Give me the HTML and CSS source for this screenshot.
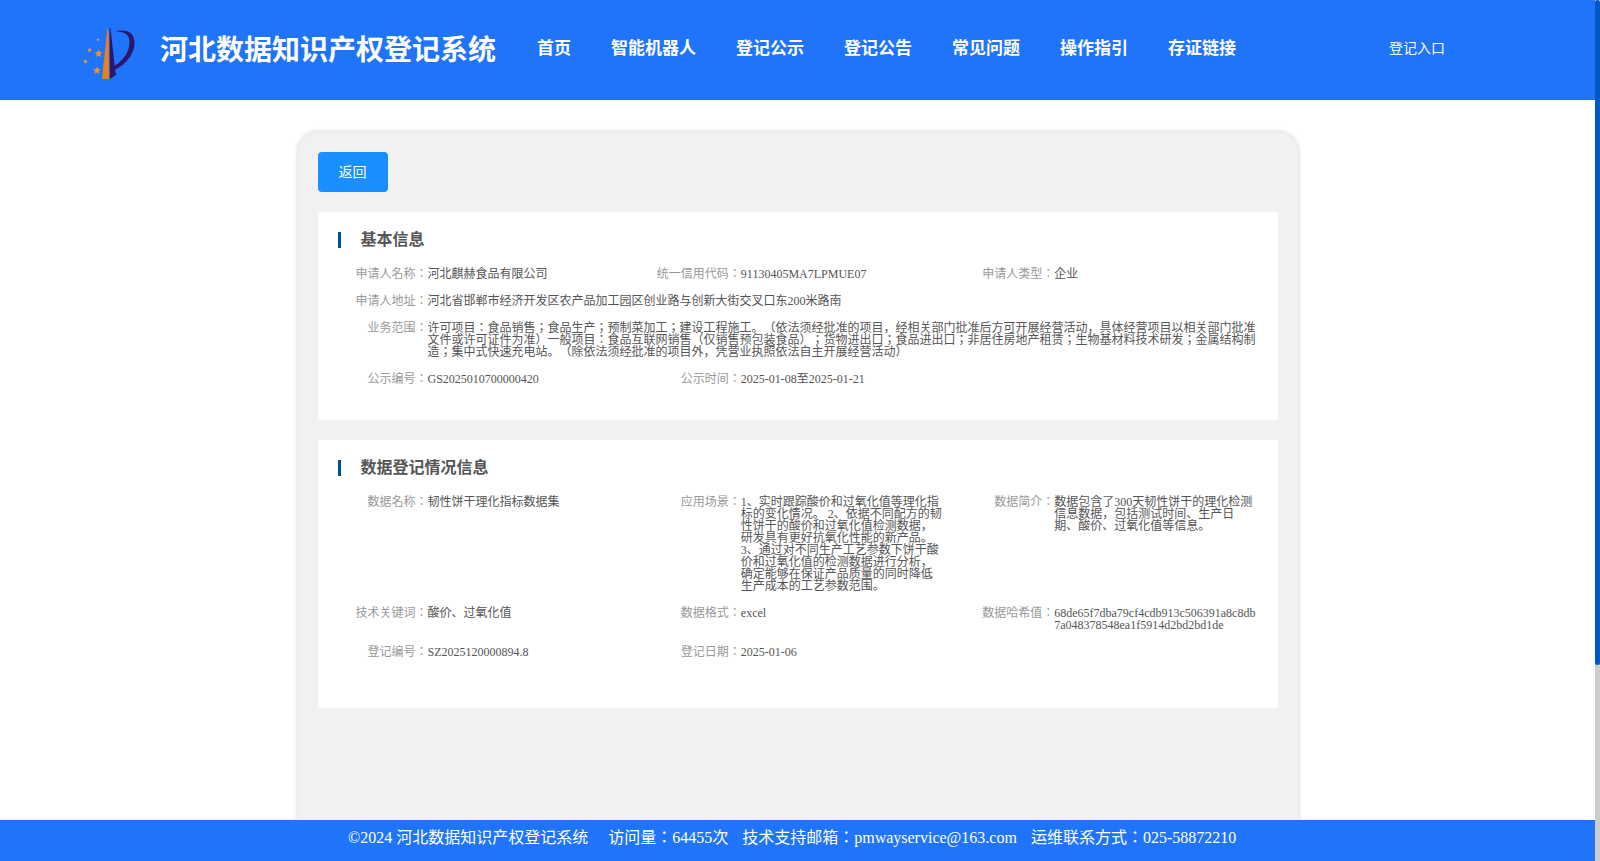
FILE: index.html
```html
<!DOCTYPE html>
<html lang="zh-CN">
<head>
  <meta charset="UTF-8">
  <title>河北数据知识产权登记系统</title>
  <link rel="stylesheet" href="styles.css">
</head>
<body>
  <div class="page">
    <header class="header">
      <svg class="logo" width="60" height="60" viewBox="0 0 60 60">
        <path d="M27.500 7 L28.800 14 L29.200 59 L22 59 Z" fill="#e5821e"/>
        <path d="M29.600 8 L30.500 8 L35 49 L36 55 L29.800 59 Z" fill="#28166f"/>
        <path d="M35 11 C44 9.500 54.500 10 54.500 23 C54.500 35 44 46 34 50 L34 46 C43 41 49.500 32 49.500 22 C49.500 13 43 12 35 11 Z" fill="#28166f"/>
        <g fill="#e5962f">
          <path d="M18.500 29.500 l1.100 2.600 2.800 .2 -2.100 1.800 .7 2.800 -2.500 -1.500 -2.500 1.500 .7 -2.800 -2.100 -1.800 2.800 -.2z"/>
          <path d="M17 46.500 l1.100 2.600 2.800 .2 -2.100 1.800 .7 2.800 -2.500 -1.500 -2.500 1.500 .7 -2.800 -2.100 -1.800 2.800 -.2z"/>
          <path d="M9.500 27.500 l.7 1.500 1.700 .2 -1.300 1.200 .4 1.700 -1.500 -.9 -1.500 .9 .4 -1.700 -1.300 -1.200 1.700 -.2z"/>
          <path d="M5.500 39 l.7 1.500 1.700 .2 -1.300 1.200 .4 1.700 -1.500 -.9 -1.500 .9 .4 -1.700 -1.300 -1.200 1.700 -.2z"/>
          <path d="M18 18 l.5 1 1 .2 -.7 .7 .2 1.100 -1 -.5 -1 .5 .2 -1.100 -.7 -.7 1 -.2z"/>
        </g>
      </svg>
      <h1 class="site-title">河北数据知识产权登记系统</h1>
      <nav class="nav">
        <a>首页</a>
        <a>智能机器人</a>
        <a>登记公示</a>
        <a>登记公告</a>
        <a>常见问题</a>
        <a>操作指引</a>
        <a>存证链接</a>
      </nav>
      <a class="entry">登记入口</a>
    </header>

    <main class="main">
      <div class="card">
        <button class="back-btn">返回</button>

        <section class="panel">
          <h2 class="panel-title">基本信息</h2>
          <div class="row">
            <div class="item"><span class="label">申请人名称：</span><span class="value">河北麒赫食品有限公司</span></div>
            <div class="item"><span class="label">统一信用代码：</span><span class="value">91130405MA7LPMUE07</span></div>
            <div class="item"><span class="label">申请人类型：</span><span class="value">企业</span></div>
          </div>
          <div class="row">
            <div class="item full"><span class="label">申请人地址：</span><span class="value">河北省邯郸市经济开发区农产品加工园区创业路与创新大街交叉口东200米路南</span></div>
          </div>
          <div class="row">
            <div class="item full"><span class="label">业务范围：</span><span class="value">许可项目：食品销售；食品生产；预制菜加工；建设工程施工。（依法须经批准的项目，经相关部门批准后方可开展经营活动，具体经营项目以相关部门批准文件或许可证件为准）一般项目：食品互联网销售（仅销售预包装食品）；货物进出口；食品进出口；非居住房地产租赁；生物基材料技术研发；金属结构制造；集中式快速充电站。（除依法须经批准的项目外，凭营业执照依法自主开展经营活动）</span></div>
          </div>
          <div class="row">
            <div class="item"><span class="label">公示编号：</span><span class="value">GS2025010700000420</span></div>
            <div class="item"><span class="label">公示时间：</span><span class="value">2025-01-08至2025-01-21</span></div>
          </div>
        </section>

        <section class="panel panel-data">
          <h2 class="panel-title">数据登记情况信息</h2>
          <div class="row">
            <div class="item"><span class="label">数据名称：</span><span class="value">韧性饼干理化指标数据集</span></div>
            <div class="item"><span class="label">应用场景：</span><span class="value">1、实时跟踪酸价和过氧化值等理化指标的变化情况。 2、依据不同配方的韧性饼干的酸价和过氧化值检测数据，研发具有更好抗氧化性能的新产品。 3、通过对不同生产工艺参数下饼干酸价和过氧化值的检测数据进行分析，确定能够在保证产品质量的同时降低生产成本的工艺参数范围。</span></div>
            <div class="item"><span class="label">数据简介：</span><span class="value">数据包含了300天韧性饼干的理化检测信息数据，包括测试时间、生产日期、酸价、过氧化值等信息。</span></div>
          </div>
          <div class="row">
            <div class="item"><span class="label">技术关键词：</span><span class="value">酸价、过氧化值</span></div>
            <div class="item"><span class="label">数据格式：</span><span class="value">excel</span></div>
            <div class="item"><span class="label">数据哈希值：</span><span class="value">68de65f7dba79cf4cdb913c506391a8c8db7a048378548ea1f5914d2bd2bd1de</span></div>
          </div>
          <div class="row">
            <div class="item"><span class="label">登记编号：</span><span class="value">SZ2025120000894.8</span></div>
            <div class="item"><span class="label">登记日期：</span><span class="value">2025-01-06</span></div>
          </div>
        </section>
      </div>
    </main>

    <footer class="footer">
      <span class="copyright">©2024 河北数据知识产权登记系统</span>
      <span>访问量：64455次</span>
      <span>技术支持邮箱：pmwayservice@163.com</span>
      <span>运维联系方式：025-58872210</span>
    </footer>
  </div>

  <div class="scrollbar"><div class="scrollbar-thumb"></div></div>
</body>
</html>
```

FILE: styles.css
```css
* {
  box-sizing: border-box;
}

body {
  margin: 0;
  height: 861px;
  display: flex;
  overflow: hidden;
  background: #fff;
  font-family: "Liberation Serif", "Noto Sans CJK SC", serif;
  text-spacing-trim: space-all;
}

.page {
  flex: 1;
  display: flex;
  flex-direction: column;
  height: 861px;
}

/* header */
.header {
  flex: none;
  display: flex;
  align-items: flex-start;
  height: 100px;
  padding-left: 80px;
  background: #2074f9;
  color: #fff;
}

.logo {
  margin-top: 20px;
}

.site-title {
  margin: 31px 0 0 20px;
  width: 336px;
  font-size: 28px;
  line-height: 40px;
  white-space: nowrap;
}

.nav {
  display: flex;
  gap: 40px;
  margin: 39px 0 0 41px;
  font-size: 17px;
  font-weight: bold;
  line-height: 20px;
  white-space: nowrap;
}

.entry {
  margin: 39px 0 0 153px;
  font-size: 14px;
  line-height: 20px;
}

/* content */
.main {
  flex: 1;
  min-height: 0;
  padding-top: 32px;
  overflow: hidden;
}

.card {
  width: 1000px;
  height: 900px;
  margin: 0 auto;
  padding: 20px;
  background: #f1f1f1;
  border-radius: 20px;
  box-shadow: 0 0 5px rgba(0, 0, 0, 0.2);
}

.back-btn {
  display: block;
  width: 70px;
  height: 40px;
  padding: 0 0 2px;
  border: none;
  border-radius: 4px;
  background: #1890ff;
  color: #fff;
  font-family: inherit;
  font-size: 14px;
  cursor: pointer;
}

.panel {
  margin-top: 20px;
  padding: 20px 10px;
  background: #fff;
}

.panel-data {
  padding-bottom: 35px;
}

.panel-title {
  margin: 0 10px 20px;
  padding-left: 20px;
  border-left: 3px solid #00508e;
  color: #555;
  font-size: 16px;
  line-height: 16px;
}

.row {
  display: flex;
  margin-bottom: 15px;
  font-size: 12px;
  line-height: 12px;
}

.item {
  display: flex;
  width: 33.3333%;
  padding: 0 10px;
}

.item.full {
  width: 100%;
}

/* centred full-width colons */
.label,
.value,
.footer {
  font-family: "Liberation Serif", "Noto Sans CJK JP", serif;
  font-feature-settings: "locl" 0;
}

.label {
  flex: none;
  width: 90px;
  color: #999;
  text-align: right;
}

.value {
  flex: 1;
  min-width: 0;
  color: #555;
  overflow-wrap: break-word;
}

/* footer */
.footer {
  flex: none;
  display: flex;
  gap: 14px;
  height: 41px;
  padding: 8px 0 0 348px;
  background: #2074f9;
  color: #fff;
  font-size: 16px;
  line-height: 20px;
  white-space: nowrap;
}

.copyright {
  margin-right: 6px;
}

/* scrollbar */
.scrollbar {
  width: 5px;
  background: #cdcdcd;
}

.scrollbar-thumb {
  height: 665px;
  border-radius: 3px;
  background: #0058c4;
}
```
